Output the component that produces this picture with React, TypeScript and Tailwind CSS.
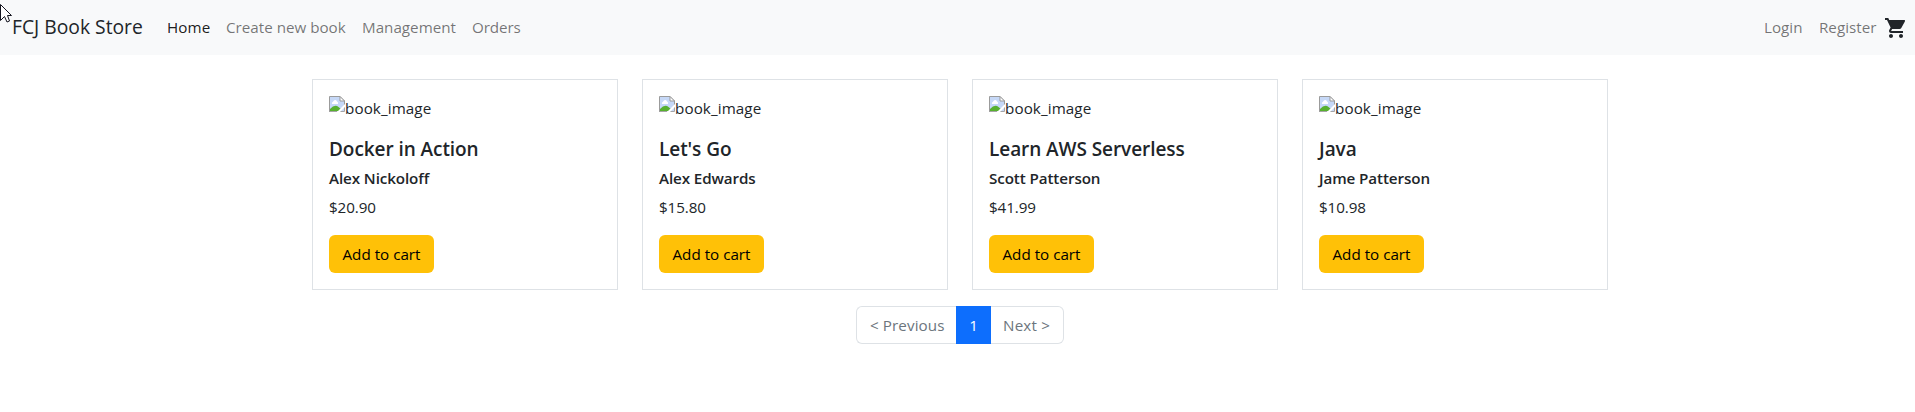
import { MdShoppingCart } from "react-icons/md";

const books = [
  { title: "Docker in Action", author: "Alex Nickoloff", price: "$20.90" },
  { title: "Let's Go", author: "Alex Edwards", price: "$15.80" },
  { title: "Learn AWS Serverless", author: "Scott Patterson", price: "$41.99" },
  { title: "Java", author: "Jame Patterson", price: "$10.98" },
];

function BrokenImage() {
  return (
    <svg width="16" height="16" viewBox="0 0 16 16" className="shrink-0">
      <path d="M0.5 0.5H11L15.5 5V15.5H0.5Z" fill="#c6d8f7" />
      <path d="M3 8V6.500Q4 6 4.500 5Q6.500 3 8 5.500Q9.500 6 9 8Z" fill="#fff" />
      <path d="M1 15V13Q6 7.500 9.500 11L12 13V15Z" fill="#58b12f" />
      <path d="M0.500 16V0.500H11L15.500 5V12" fill="none" stroke="#9b9b9b" />
      <path d="M11 0.500V5H15.500Z" fill="#fff" stroke="#9b9b9b" />
      <path d="M8 16L16 8V11L11 16Z" fill="#fff" />
      <path d="M0.500 15.500H8M11.500 15.500H15.500V12" fill="none" stroke="#a5a5a5" />
    </svg>
  );
}

function Cursor() {
  return (
    <svg width="14" height="24" viewBox="0 0 14 24" className="absolute left-0 top-0">
      <path d="M0.500 4.500L11.500 15.500H7.500L9.500 21L7 22L4.500 16.500L0.500 20.500Z" fill="#fff" stroke="#15151f" />
    </svg>
  );
}

export default function App() {
  return (
    <div className="relative h-[412px] overflow-hidden bg-white font-['Open_Sans',sans-serif] text-[15.2px] leading-6 text-[#212529]">
      <div className="w-[1920px]">
        <nav className="flex h-[55px] items-center bg-[#f8f9fa] px-3 pb-px whitespace-nowrap">
          <a className="w-[155px] text-[19.3px] leading-[30px]">FCJ Book Store</a>
          <a className="w-[59px] tracking-[0.1px] text-black/90">Home</a>
          <a className="w-[136px] text-black/55">Create new book</a>
          <a className="w-[110px] text-black/55">Management</a>
          <a className="tracking-[-0.1px] text-black/55">Orders</a>
          <a className="ml-auto w-[55px] text-black/55">Login</a>
          <a className="w-[65px] text-black/55">Register</a>
          <MdShoppingCart size={24} className="mt-px" />
        </nav>
        <main className="mx-auto mt-6 w-[1296px]">
          <div className="grid grid-cols-4 gap-6">
            {books.map((b) => (
              <article key={b.title} className="h-[211px] border border-[#dee2e6] p-4 whitespace-nowrap">
                <div className="mb-[17px] flex h-6">
                  <BrokenImage />
                  <span className="tracking-[0.1px]">book_image</span>
                </div>
                <h5 className="mb-2 text-[19px] leading-6 font-semibold tracking-[-0.07px]">{b.title}</h5>
                <h6 className="mb-[7px] leading-[19px] font-semibold tracking-[-0.1px]">{b.author}</h6>
                <p className="mb-4 tracking-[-0.1px]">{b.price}</p>
                <button className="flex h-[38px] w-[105px] items-center justify-center rounded-md bg-[#ffc107] text-black">
                  Add to cart
                </button>
              </article>
            ))}
          </div>
          <div className="mx-auto mt-4 flex h-[38px] w-[208px] whitespace-nowrap text-[#6c757d]">
            <a className="flex w-[100px] items-center rounded-l-md border border-r-0 border-[#dee2e6] pl-[13px] tracking-[0.1px]">&lt; Previous</a>
            <a className="flex w-[35px] items-center justify-center bg-[#0d6efd] text-white">1</a>
            <a className="flex w-[73px] items-center rounded-r-md border border-l-0 border-[#dee2e6] pl-3 tracking-[0.2px]">Next &gt;</a>
          </div>
        </main>
      </div>
      <Cursor />
    </div>
  );
}
